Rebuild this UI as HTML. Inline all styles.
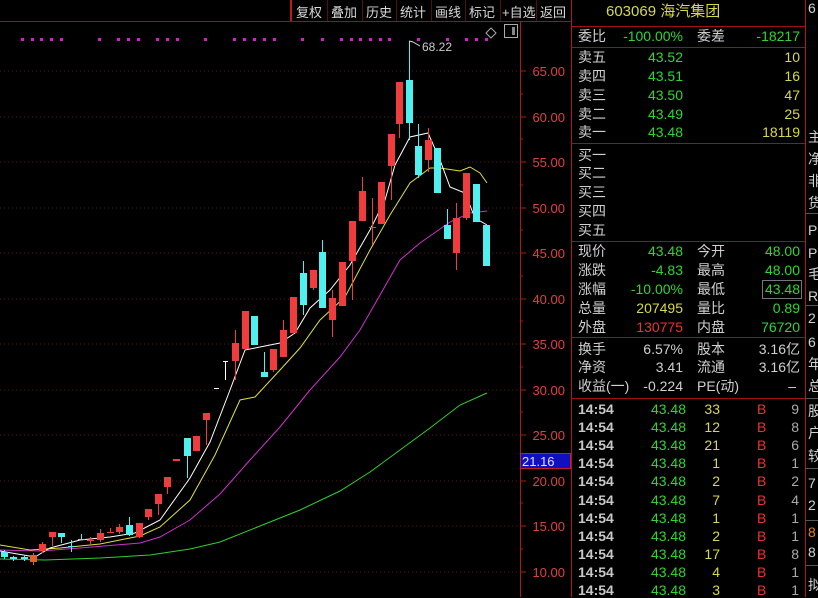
<!DOCTYPE html>
<html><head><meta charset="utf-8">
<style>
body{margin:0;width:818px;height:597px;background:#000;overflow:hidden;position:relative;font-family:"Liberation Sans","Noto Sans CJK SC","WenQuanYi Zen Hei",sans-serif;}
.t{position:absolute;font-size:14px;line-height:16px;white-space:nowrap;}
.r{text-align:right;}
.w{color:#d0d0d0}.g{color:#2fd62f}.y{color:#d8d84a}.rd{color:#f03030}
.tb{position:absolute;top:2px;font-size:13px;color:#d8d8d8;}
.hl{position:absolute;background:#a01010;height:1px;}
.vl{position:absolute;background:#a01010;width:1px;}
</style></head><body>
<!-- toolbar -->
<div class="vl" style="left:290px;top:0;height:21px;width:2px;background:#c01818"></div>
<div class="tb" style="left:296px">复权</div>
<div class="tb" style="left:331px">叠加</div>
<div class="tb" style="left:366px">历史</div>
<div class="tb" style="left:400px">统计</div>
<div class="tb" style="left:435px">画线</div>
<div class="tb" style="left:469px">标记</div>
<div class="tb" style="left:502px">+自选</div>
<div class="tb" style="left:540px">返回</div>
<div class="vl" style="left:327px;top:0;height:21px;background:#501010"></div>
<div class="vl" style="left:362px;top:0;height:21px;background:#501010"></div>
<div class="vl" style="left:396px;top:0;height:21px;background:#501010"></div>
<div class="vl" style="left:431px;top:0;height:21px;background:#501010"></div>
<div class="vl" style="left:465px;top:0;height:21px;background:#501010"></div>
<div class="vl" style="left:500px;top:0;height:21px;background:#501010"></div>
<div class="vl" style="left:536px;top:0;height:21px;background:#501010"></div>
<div class="hl" style="left:0;top:21px;width:571px"></div>

<svg style="position:absolute;left:0;top:0" width="571" height="597">
<g stroke="#6a1010" stroke-dasharray="1,3">
<line x1="0" y1="71" x2="520" y2="71"/><line x1="0" y1="117" x2="520" y2="117"/><line x1="0" y1="162" x2="520" y2="162"/><line x1="0" y1="208" x2="520" y2="208"/><line x1="0" y1="253" x2="520" y2="253"/><line x1="0" y1="299" x2="520" y2="299"/><line x1="0" y1="344" x2="520" y2="344"/><line x1="0" y1="390" x2="520" y2="390"/><line x1="0" y1="435" x2="520" y2="435"/><line x1="0" y1="481" x2="520" y2="481"/><line x1="0" y1="526" x2="520" y2="526"/><line x1="0" y1="572" x2="520" y2="572"/>
</g>
<line x1="520.5" y1="21" x2="520.5" y2="597" stroke="#b01818"/>
<g stroke="#b01818">
<line x1="520" y1="71" x2="526" y2="71"/><line x1="520" y1="117" x2="526" y2="117"/><line x1="520" y1="162" x2="526" y2="162"/><line x1="520" y1="208" x2="526" y2="208"/><line x1="520" y1="253" x2="526" y2="253"/><line x1="520" y1="299" x2="526" y2="299"/><line x1="520" y1="344" x2="526" y2="344"/><line x1="520" y1="390" x2="526" y2="390"/><line x1="520" y1="435" x2="526" y2="435"/><line x1="520" y1="481" x2="526" y2="481"/><line x1="520" y1="526" x2="526" y2="526"/><line x1="520" y1="572" x2="526" y2="572"/>
<line x1="520" y1="94" x2="523" y2="94"/><line x1="520" y1="139" x2="523" y2="139"/><line x1="520" y1="185" x2="523" y2="185"/><line x1="520" y1="230" x2="523" y2="230"/><line x1="520" y1="276" x2="523" y2="276"/><line x1="520" y1="321" x2="523" y2="321"/><line x1="520" y1="367" x2="523" y2="367"/><line x1="520" y1="412" x2="523" y2="412"/><line x1="520" y1="503" x2="523" y2="503"/><line x1="520" y1="549" x2="523" y2="549"/>
</g>
<g fill="#e04040" font-family="Liberation Sans,sans-serif" font-size="13" text-anchor="end">
<text x="565" y="76">65.00</text><text x="565" y="122">60.00</text><text x="565" y="167">55.00</text><text x="565" y="213">50.00</text><text x="565" y="258">45.00</text><text x="565" y="304">40.00</text><text x="565" y="349">35.00</text><text x="565" y="395">30.00</text><text x="565" y="440">25.00</text><text x="565" y="486">20.00</text><text x="565" y="531">15.00</text><text x="565" y="577">10.00</text>
</g>
<rect x="520.5" y="453.5" width="50" height="15" fill="#1010c0" stroke="#c02020"/>
<text x="522" y="466" fill="#e0e0ff" font-size="13" font-family="Liberation Sans,sans-serif">21.16</text>
<!-- icons -->
<path d="M491 28 L496 33 L491 38 L486 33 Z" fill="none" stroke="#aaa"/>
<rect x="504.5" y="24.5" width="13" height="13" fill="none" stroke="#aaa"/><rect x="512" y="27" width="3" height="8" fill="#888"/>
<!-- purple dots -->
<g fill="#d020d0">
<rect x="21" y="38" width="3" height="3"/><rect x="31" y="38" width="3" height="3"/><rect x="40" y="38" width="3" height="3"/><rect x="50" y="38" width="3" height="3"/><rect x="60" y="38" width="3" height="3"/><rect x="98" y="38" width="3" height="3"/><rect x="117" y="38" width="3" height="3"/><rect x="127" y="38" width="3" height="3"/><rect x="137" y="38" width="3" height="3"/><rect x="156" y="38" width="3" height="3"/><rect x="166" y="38" width="3" height="3"/><rect x="176" y="38" width="3" height="3"/><rect x="204" y="38" width="3" height="3"/><rect x="233" y="38" width="3" height="3"/><rect x="243" y="38" width="3" height="3"/><rect x="253" y="38" width="3" height="3"/><rect x="263" y="38" width="3" height="3"/><rect x="273" y="38" width="3" height="3"/><rect x="301" y="38" width="3" height="3"/><rect x="321" y="38" width="3" height="3"/><rect x="340" y="38" width="3" height="3"/><rect x="350" y="38" width="3" height="3"/><rect x="359" y="38" width="3" height="3"/><rect x="369" y="38" width="3" height="3"/><rect x="379" y="38" width="3" height="3"/><rect x="388" y="38" width="3" height="3"/><rect x="417" y="38" width="3" height="3"/><rect x="446" y="38" width="3" height="3"/><rect x="465" y="38" width="3" height="3"/><rect x="475" y="38" width="3" height="3"/><rect x="485" y="38" width="3" height="3"/>
</g>
<!-- MAs -->
<g fill="none" stroke-width="1">
<polyline stroke="#30d030" points="0,559 45,560 100,558 150,555 190,549 220,542 260,526 300,510 340,491 370,472 400,450 430,428 460,405 487,393"/>
<polyline stroke="#d030d0" points="0,550 40,551 80,548 140,543 160,537 190,520 220,494 250,460 280,427 310,390 340,357 360,330 380,295 400,260 420,243 450,222 470,213 487,211"/>
<polyline stroke="#e0e040" points="0,545 30,550 60,548 100,544 140,536 160,527 190,500 215,455 240,400 255,397 280,370 300,348 320,320 345,297 370,250 390,215 410,183 430,168 440,168 460,171 470,167 480,173 487,183"/>
<polyline stroke="#ffffff" points="0,551 35,557 50,548 80,540 110,537 135,533 160,520 190,478 210,442 230,390 245,350 260,347 280,343 295,333 310,308 330,290 350,265 370,230 385,200 395,165 410,137 428,133 440,160 450,187 465,193 475,218 487,225"/>
</g>
<!-- candles -->
<g id="c"></g>
<line x1="409" y1="41" x2="413" y2="42" stroke="#ddd"/><line x1="413" y1="42" x2="420" y2="46" stroke="#ddd"/>
<text x="422" y="51" fill="#ccc" font-size="12" font-family="Liberation Sans,sans-serif">68.22</text>
</svg>

<!-- right panel -->
<div class="vl" style="left:571px;top:0;height:597px;background:#b01818"></div>
<div class="vl" style="left:805px;top:0;height:597px;background:#b01818"></div>
<div class="t y" style="left:606px;top:4px;font-size:15px">603069 海汽集团</div>
<div class="hl" style="left:571px;top:26px;width:234px"></div>
<div class="t w" style="left:578px;top:28px">委比</div><div class="t g r" style="left:620px;top:28px;width:63px">-100.00%</div>
<div class="t w" style="left:697px;top:28px">委差</div><div class="t g r" style="left:740px;top:28px;width:60px">-18217</div>
<div class="hl" style="left:571px;top:47px;width:234px"></div>

<div class="t w" style="left:578px;top:49px">卖五</div><div class="t g r" style="left:620px;top:49px;width:63px">43.52</div><div class="t y r" style="left:740px;top:49px;width:60px">10</div>
<div class="t w" style="left:578px;top:68px">卖四</div><div class="t g r" style="left:620px;top:68px;width:63px">43.51</div><div class="t y r" style="left:740px;top:68px;width:60px">16</div>
<div class="t w" style="left:578px;top:87px">卖三</div><div class="t g r" style="left:620px;top:87px;width:63px">43.50</div><div class="t y r" style="left:740px;top:87px;width:60px">47</div>
<div class="t w" style="left:578px;top:106px">卖二</div><div class="t g r" style="left:620px;top:106px;width:63px">43.49</div><div class="t y r" style="left:740px;top:106px;width:60px">25</div>
<div class="t w" style="left:578px;top:124px">卖一</div><div class="t g r" style="left:620px;top:124px;width:63px">43.48</div><div class="t y r" style="left:740px;top:124px;width:60px">18119</div>
<div class="hl" style="left:571px;top:143px;width:234px"></div>
<div class="t w" style="left:578px;top:147px">买一</div>
<div class="t w" style="left:578px;top:165px">买二</div>
<div class="t w" style="left:578px;top:184px">买三</div>
<div class="t w" style="left:578px;top:203px">买四</div>
<div class="t w" style="left:578px;top:222px">买五</div>
<div class="hl" style="left:571px;top:241px;width:234px"></div>

<div class="t w" style="left:578px;top:243px">现价</div><div class="t g r" style="left:620px;top:243px;width:63px">43.48</div><div class="t w" style="left:697px;top:243px">今开</div><div class="t g r" style="left:740px;top:243px;width:60px">48.00</div>
<div class="t w" style="left:578px;top:262px">涨跌</div><div class="t g r" style="left:620px;top:262px;width:63px">-4.83</div><div class="t w" style="left:697px;top:262px">最高</div><div class="t g r" style="left:740px;top:262px;width:60px">48.00</div>
<div class="t w" style="left:578px;top:281px">涨幅</div><div class="t g r" style="left:620px;top:281px;width:63px">-10.00%</div><div class="t w" style="left:697px;top:281px">最低</div><div class="t g r" style="left:740px;top:281px;width:60px">43.48</div>
<div style="position:absolute;left:762px;top:280px;width:38px;height:17px;border:1px solid #777"></div>
<div class="t w" style="left:578px;top:300px">总量</div><div class="t y r" style="left:620px;top:300px;width:63px">207495</div><div class="t w" style="left:697px;top:300px">量比</div><div class="t g r" style="left:740px;top:300px;width:60px">0.89</div>
<div class="t w" style="left:578px;top:319px">外盘</div><div class="t rd r" style="left:620px;top:319px;width:63px">130775</div><div class="t w" style="left:697px;top:319px">内盘</div><div class="t g r" style="left:740px;top:319px;width:60px">76720</div>
<div class="hl" style="left:571px;top:337px;width:234px"></div>
<div class="t w" style="left:578px;top:341px">换手</div><div class="t w r" style="left:620px;top:341px;width:63px">6.57%</div><div class="t w" style="left:697px;top:341px">股本</div><div class="t w r" style="left:740px;top:341px;width:60px">3.16亿</div>
<div class="t w" style="left:578px;top:359px">净资</div><div class="t w r" style="left:620px;top:359px;width:63px">3.41</div><div class="t w" style="left:697px;top:359px">流通</div><div class="t w r" style="left:740px;top:359px;width:60px">3.16亿</div>
<div class="t w" style="left:578px;top:378px">收益(一)</div><div class="t w r" style="left:620px;top:378px;width:63px">-0.224</div><div class="t w" style="left:697px;top:378px">PE(动)</div><div class="t w r" style="left:740px;top:378px;width:56px">–</div>
<div class="hl" style="left:571px;top:398px;width:234px"></div>
<div id="ticks"></div>

<!-- far right strip -->
<div class="t w" style="left:808px;top:0px">6</div>
<div class="t w" style="left:808px;top:129px">主</div><div class="t w" style="left:808px;top:151px">净</div><div class="t w" style="left:808px;top:173px">非</div><div class="t w" style="left:808px;top:195px">货</div>
<div class="hl" style="left:805px;top:213px;width:13px;background:#555"></div>
<div class="t w" style="left:808px;top:222px">P</div><div class="t w" style="left:808px;top:245px">P</div><div class="t w" style="left:808px;top:266px">毛</div><div class="t w" style="left:808px;top:288px">R</div>
<div class="hl" style="left:805px;top:305px;width:13px;background:#555"></div>
<div class="t w" style="left:808px;top:310px">2</div><div class="t w" style="left:808px;top:334px">6</div><div class="t w" style="left:808px;top:356px">年</div><div class="t w" style="left:808px;top:378px">总</div>
<div class="hl" style="left:805px;top:398px;width:13px;background:#555"></div>
<div class="t w" style="left:808px;top:403px">股</div><div class="t w" style="left:808px;top:425px">户</div><div class="t w" style="left:808px;top:448px">较</div>
<div class="hl" style="left:805px;top:468px;width:13px;background:#555"></div>
<div class="t w" style="left:808px;top:475px">7</div><div class="t w" style="left:808px;top:497px">2</div>
<div class="hl" style="left:805px;top:520px;width:13px;background:#555"></div>
<div class="t" style="left:808px;top:524px;color:#e08020">8</div><div class="t w" style="left:808px;top:544px">8</div>
<div class="hl" style="left:805px;top:565px;width:13px;background:#555"></div>
<div class="t w" style="left:808px;top:577px">拟</div>

<script>
var C=[[4,552,557,550,559,0],[13,557,559,556,561,0],[24,557,559,555,561,0],[33,555,562,553,565,2],[42,544,551,542,553,1],[52,532,537,532,546,1],[61,533,537,533,543,0],[71,546,547,540,552,0],[81,539,540,534,540,0],[90,540,541,537,544,1],[100,533,540,529,542,1],[110,532,533,528,533,1],[119,527,532,524,534,1],[129,525,535,517,536,0],[139,523,537,523,538,1],[148,509,517,509,520,1],[158,494,504,494,515,1],[167,477,487,477,494,1],[176,459,461,459,461,1],[187,438,456,438,478,0],[196,436,451,436,451,1],[206,413,420,413,445,1],[216,388,389,388,389,3],[225,361,362,361,380,3],[235,343,361,330,380,1],[245,311,349,311,349,1],[254,316,345,316,345,0],[264,372,377,352,377,0],[273,349,370,349,372,1],[283,330,357,320,357,1],[293,297,333,297,335,1],[303,273,305,261,315,0],[313,270,288,270,290,1],[322,252,308,240,308,0],[332,298,320,290,337,1],[342,262,306,262,306,1],[352,221,261,221,300,1],[362,191,221,177,221,1],[372,227,228,198,245,1],[381,182,224,182,224,1],[391,134,166,134,200,1],[399,82,124,82,138,1],[409,80,123,41,140,0],[418,146,175,124,178,0],[428,140,160,128,172,1],[437,148,193,148,193,0],[447,225,239,209,239,0],[456,218,253,203,270,1],[466,173,218,173,220,1],[476,184,222,184,222,0],[486,225,266,225,266,0]];
var col=["#50f0f0","#f03c3c","#e06030","#ffffff"];var s="";
C.forEach(function(c){var f=col[c[5]];var w=(c[5]==3)?5:7;
s+='<line x1="'+(c[0]+0.5)+'" y1="'+c[3]+'" x2="'+(c[0]+0.5)+'" y2="'+c[4]+'" stroke="'+f+'"/>';
var h=Math.max(c[2]-c[1],1);s+='<rect x="'+(c[0]-Math.floor(w/2))+'" y="'+c[1]+'" width="'+w+'" height="'+h+'" fill="'+f+'"/>';});
document.getElementById("c").innerHTML=s;
var T=[[33,9],[12,8],[21,6],[1,1],[2,2],[7,4],[1,1],[2,1],[17,8],[4,1],[3,1]];var h="";
T.forEach(function(t,i){var y=401+i*18.1;
h+='<div class="t w" style="left:578px;top:'+y+'px;font-weight:bold;color:#c8c8c8">14:54</div><div class="t g r" style="left:620px;top:'+y+'px;width:66px">43.48</div><div class="t y r" style="left:690px;top:'+y+'px;width:30px">'+t[0]+'</div><div class="t rd" style="left:757px;top:'+y+'px">B</div><div class="t r" style="left:780px;top:'+y+'px;width:19px;color:#aaa">'+t[1]+'</div>';});
document.getElementById("ticks").innerHTML=h;
</script>
</body></html>
